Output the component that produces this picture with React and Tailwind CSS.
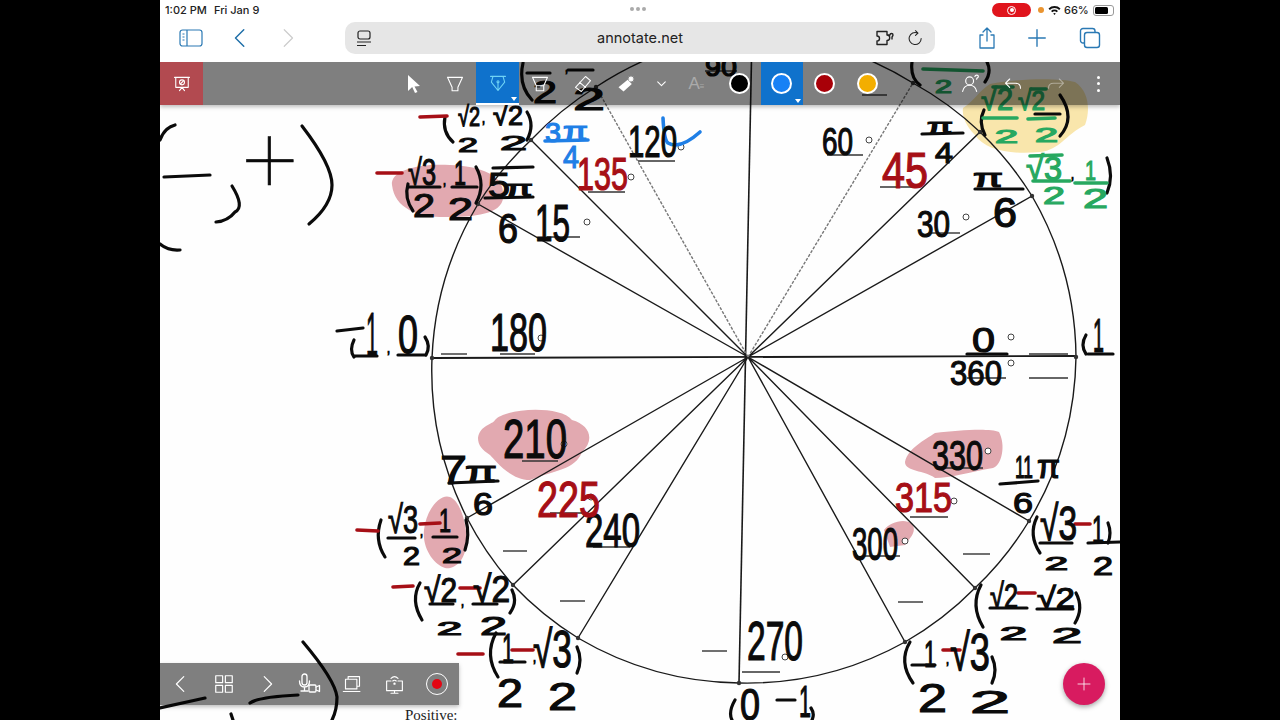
import React from 'react'

const INK = '#0b0b0b'
const RED = '#a60f16'
const BLUE = '#1f7fe6'
const GREEN = '#27a860'

// [text, left, baseline, width, digit height]
const inkText = [
  ['√2', 458, 126, 22, 20], ['√2', 493, 125, 30, 20], ['2', 458, 152, 20, 15], ['2', 500, 150, 27, 15], [',', 482, 123, 3, 10],
  ['2', 533, 103, 24, 23], ['2', 573, 110, 32, 23], [',', 565, 72, 3, 10], ['90', 705, 76, 32, 18],
  ['120', 628, 157, 49, 32], ['√3', 408, 185, 28, 26], ['2', 413, 217, 22, 24], [',', 443, 185, 3, 10], ['1', 454, 185, 12, 25], ['2', 448, 220, 25, 23],
  ['5', 488, 197, 22, 25], ['π', 505, 196, 28, 16], ['6', 498, 243, 20, 30], ['15', 535, 241, 35, 37],
  ['1', 366, 356, 12, 45], [',', 387, 353, 3, 10], ['0', 398, 353, 20, 38], ['180', 490, 351, 57, 38],
  ['60', 822, 155, 31, 28], ['π', 927, 133, 26, 15], ['4', 935, 163, 18, 21], ['π', 973, 187, 30, 18], ['6', 993, 227, 24, 30],
  ['30', 917, 237, 33, 27], ['0', 972, 352, 23, 25], ['360', 950, 385, 52, 25], ['1', 1093, 352, 11, 35],
  ['210', 503, 458, 64, 40], ['7', 440, 484, 27, 29], ['π', 465, 482, 32, 21], ['6', 473, 515, 20, 23],
  ['240', 585, 547, 55, 35], ['√3', 388, 533, 30, 28], ['2', 403, 565, 17, 18], [',', 420, 536, 3, 10], ['1', 439, 532, 12, 24], ['2', 442, 563, 20, 16],
  ['√2', 424, 602, 33, 25], ['2', 437, 635, 25, 13], [',', 461, 606, 3, 10], ['√2', 473, 602, 37, 27], ['2', 480, 635, 27, 18],
  ['1', 502, 663, 12, 30], ['2', 497, 707, 26, 29], [',', 533, 662, 3, 10], ['√3', 533, 667, 39, 37], ['2', 548, 710, 29, 28],
  ['330', 932, 470, 51, 30], ['11', 1015, 478, 18, 23], ['π', 1037, 478, 23, 24], ['6', 1013, 513, 20, 21],
  ['300', 852, 560, 46, 33], ['270', 747, 660, 56, 40],
  ['√3', 1040, 540, 37, 35], ['2', 1045, 570, 23, 13], ['1', 1092, 543, 12, 28], ['2', 1093, 575, 20, 18],
  ['√2', 990, 608, 28, 25], ['√2', 1037, 608, 38, 21], ['2', 1000, 640, 27, 13], ['2', 1052, 643, 30, 16],
  ['1', 924, 667, 12, 27], [',', 946, 664, 3, 10], ['√3', 950, 670, 40, 37], ['2', 918, 712, 29, 29], ['2', 970, 713, 40, 23],
  ['0', 740, 720, 20, 32], ['1', 799, 717, 12, 32], [',', 1071, 179, 3, 10],
]
const redText = [['135', 577, 190, 51, 33], ['45', 882, 188, 46, 36], ['225', 537, 517, 63, 36], ['315', 895, 512, 57, 30]]
const blueText = [['3', 545, 142, 16, 20], ['π', 563, 140, 25, 18], ['4', 563, 168, 16, 23]]
const greenText = [
  ['2', 935, 93, 17, 13], ['√2', 981, 110, 32, 22], ['2', 995, 143, 23, 13], ['√2', 1018, 110, 27, 20], ['2', 1035, 142, 23, 14],
  ['√3', 1026, 180, 36, 24], ['2', 1043, 204, 22, 17], ['1', 1085, 180, 11, 20], ['2', 1083, 208, 25, 20],
]

const inkStrokes = [
  'M175 125Q164 128 160 140', 'M164 177L210 175', 'M232 186Q245 207 235 212Q228 221 216 222',
  'M302 126Q332 165 332 185Q332 205 309 224', 'M160 244Q168 251 180 250',
  'M303 642Q335 680 337 697Q337 710 332 720', 'M160 708L205 698', 'M250 703Q258 697 298 695', 'M231 714L233 720',
  'M445 117Q442 132 453 142', 'M527 112Q535 125 527 140', 'M408 187L440 187', 'M452 187L477 187', 'M476 167Q486 185 476 203', 'M408 184Q404 198 413 211',
  'M493 168L533 167', 'M485 198L533 197', 'M523 63Q518 85 532 100', 'M527 73L550 73', 'M568 70L593 70',
  'M337 331L363 328', 'M354 340Q349 350 354 357', 'M355 356L377 356', 'M398 355L425 355', 'M425 337Q431 346 426 355',
  'M922 134L963 133', 'M975 189L1023 189', 'M967 354L1007 354', 'M1088 354L1113 354', 'M1086 335Q1080 345 1086 354', 'M1107 158Q1114 176 1107 193',
  'M912 62Q910 78 920 85', 'M987 62Q992 72 985 82', 'M1060 95Q1076 118 1060 136', 'M984 110Q978 122 985 135', 'M1035 114L1060 114',
  'M449 483L498 481', 'M381 520Q374 540 385 557', 'M388 538L415 538', 'M433 537L457 537', 'M466 520Q470 535 465 550',
  'M420 583Q410 600 422 620', 'M430 604L453 604', 'M473 604L497 604', 'M512 590Q518 602 510 613',
  'M496 633Q484 655 498 677', 'M500 662L525 662', 'M577 647Q583 660 577 673',
  'M1000 484L1038 481', 'M1037 517Q1028 535 1040 553', 'M1040 543L1072 543', 'M1088 543L1120 542', 'M1108 523Q1112 533 1108 543',
  'M981 585Q970 605 983 627', 'M990 608L1027 608', 'M1037 609L1073 609', 'M1076 593Q1084 608 1075 623',
  'M910 642Q898 662 913 683', 'M912 665L935 665', 'M992 657Q998 670 992 683',
  'M735 700Q728 712 732 720', 'M777 700L795 700', 'M811 708Q815 714 812 720',
]
const redStrokes = [
  'M420 117L447 116', 'M377 173L402 173', 'M357 530L378 531', 'M420 524L440 523', 'M393 587L413 586', 'M460 588L480 588',
  'M458 654L483 654', 'M512 650L533 650', 'M1075 524L1090 524', 'M1018 593L1035 593', 'M943 650L960 650',
]
const greenStrokes = [
  'M923 69L983 71', 'M983 118L1017 118', 'M1028 119L1055 118', 'M993 87L1013 87', 'M1031 89L1046 89',
  'M1030 156L1062 155', 'M1033 181L1070 181', 'M1075 183L1107 183',
]
const blanks = [
  [638, 161, 675], [588, 192, 625], [547, 237, 580], [441, 354, 467], [500, 354, 535], [827, 155, 863], [880, 187, 920], [930, 233, 960],
  [1029, 354, 1068], [1029, 378, 1068], [967, 378, 1006], [522, 461, 558], [550, 513, 587], [593, 547, 630], [503, 551, 527], [560, 601, 585],
  [702, 651, 727], [942, 468, 983], [910, 517, 948], [863, 556, 900], [963, 554, 990], [898, 602, 923], [742, 672, 780], [862, 95, 887], [705, 71, 737],
]
const degrees = [[631, 177], [681, 147], [587, 222], [541, 338], [869, 140], [966, 217], [1011, 337], [1011, 363], [564, 444], [591, 497], [988, 451], [954, 501], [905, 541], [785, 657]]
const rim = [[1032, 196], [980, 132], [913, 83], [596, 87], [531, 140], [478, 204], [432, 358], [467, 518], [513, 585], [578, 638], [739, 683], [905, 642], [975, 588], [1029, 521], [1076, 357]]

function Hand({ t, x, y, w, h, c }) {
  return (
    <text x={x} y={y} textLength={w} lengthAdjust="spacingAndGlyphs" fontSize={h / 0.72} fill={c} stroke={c} strokeWidth="1.200" className="font-['Liberation_Sans',sans-serif]">
      {t}
    </text>
  )
}

function Handwriting() {
  return (
    <svg viewBox="160 62 960 658" className="absolute inset-0 w-full h-full">
      {/* highlighter first so the ink sits on top */}
      <g fill="#e2a9b0">
        <path d="M392 185C390 170 420 163 450 165C480 166 505 175 503 195C505 212 480 217 450 217C420 218 395 210 392 185Z" />
        <path d="M478 438C480 425 492 425 495 420C505 408 560 405 572 420C590 425 595 440 582 452C575 470 555 470 530 480C510 480 495 460 490 455C482 450 478 445 478 438Z" />
        <path d="M424 530C426 510 440 493 450 497C462 502 468 530 466 545C465 560 455 570 445 568C435 565 422 550 424 530Z" />
        <path d="M905 462C908 448 925 440 935 433C960 430 990 428 999 432C1006 445 1002 465 993 468C970 472 950 478 935 478C925 470 905 472 905 462Z" />
        <path d="M884 530C890 522 905 518 912 524C918 532 908 540 905 545L890 547Z" />
      </g>
      <path fill="#f9e6ac" d="M963 108C975 100 980 90 990 84C1020 78 1060 78 1075 82C1090 92 1090 112 1085 125C1065 135 1060 150 1040 152C1010 155 985 150 975 135C965 125 962 115 963 108Z" />

      {/* printed unit circle */}
      <g fill="none" stroke="#1a1a1a" strokeWidth="1.400">
        <path d="M1076 357A326 326 0 0 0 1032 196A326 326 0 0 0 980 132A326 326 0 0 0 913 83A326 326 0 0 0 750 34A326 326 0 0 0 596 87A326 326 0 0 0 531 140A326 326 0 0 0 478 204A326 326 0 0 0 432 358A326 326 0 0 0 467 518A326 326 0 0 0 513 585A326 326 0 0 0 578 638A326 326 0 0 0 739 683A326 326 0 0 0 905 642A326 326 0 0 0 975 588A326 326 0 0 0 1029 521A326 326 0 0 0 1076 357Z" />
        <path d="M432 358L1076 356" strokeWidth="1.800" />
        <path d="M752 34L739 683" strokeWidth="1.600" />
        <path d="M748 357L1032 196M748 357L980 132M748 357L531 140M748 357L478 204M748 357L467 518M748 357L513 585M748 357L578 638M748 357L905 642M748 357L975 588M748 357L1029 521" />
        <path d="M748 357L913 83M748 357L596 87" stroke="#777" strokeDasharray="3 1.500" />
        {blanks.map(([x1, y, x2]) => (
          <path key={`${x1}-${y}`} d={`M${x1} ${y}L${x2} ${y}`} stroke="#333" />
        ))}
        {degrees.map(([cx, cy]) => (
          <circle key={`${cx}-${cy}`} cx={cx} cy={cy} r="3" fill="#fff" stroke="#444" strokeWidth="1" />
        ))}
      </g>
      {rim.map(([cx, cy]) => (
        <circle key={`${cx}-${cy}`} cx={cx} cy={cy} r="2.200" fill="#333" />
      ))}

      {/* pen strokes */}
      <g fill="none" strokeLinecap="round" strokeWidth="3.200">
        <g stroke={INK}>
          {inkStrokes.map((d) => <path key={d} d={d} />)}
        </g>
        <g stroke={RED} strokeWidth="3.600">
          {redStrokes.map((d) => <path key={d} d={d} />)}
        </g>
        <g stroke={GREEN} strokeWidth="3.600">
          {greenStrokes.map((d) => <path key={d} d={d} />)}
        </g>
        <path stroke={BLUE} strokeWidth="3.600" d="M545 141L588 140M663 118Q664 140 668 143Q680 150 700 132" />
      </g>
      <text x="243" y="191" textLength="54" lengthAdjust="spacingAndGlyphs" fontSize="92" fill={INK} className="font-['Roboto',sans-serif] font-thin" stroke={INK} strokeWidth=".6">+</text>
      {inkText.map(([t, x, y, w, h]) => <Hand key={`${t}${x}${y}`} t={t} x={x} y={y} w={w} h={h} c={INK} />)}
      {redText.map(([t, x, y, w, h]) => <Hand key={t} t={t} x={x} y={y} w={w} h={h} c={RED} />)}
      {blueText.map(([t, x, y, w, h]) => <Hand key={t} t={t} x={x} y={y} w={w} h={h} c={BLUE} />)}
      {greenText.map(([t, x, y, w, h]) => <Hand key={`${t}${x}`} t={t} x={x} y={y} w={w} h={h} c={GREEN} />)}
      <text x="405" y="720" fontSize="15" fill="#222" className="font-['Liberation_Serif',serif]">Positive:</text>
    </svg>
  )
}

function Line({ children, size = 24, width = 1.3, className = 'text-white' }) {
  return (
    <svg width={size} height={size} viewBox="0 0 24 24" fill="none" stroke="currentColor" strokeWidth={width} strokeLinecap="round" strokeLinejoin="round" className={className}>
      {children}
    </svg>
  )
}

function Slot({ children, className = '' }) {
  return <div className={`relative w-[42.7px] h-full flex items-center justify-center ${className}`}>{children}</div>
}

function Swatch({ className }) {
  return <span className={`w-[21px] h-[21px] rounded-full border-2 border-white ${className}`} />
}

function ActiveMark() {
  return <span className="absolute right-[2px] bottom-[2px] w-0 h-0 border-l-[3px] border-r-[3px] border-t-[4px] border-l-transparent border-r-transparent border-t-white" />
}

function TopTools() {
  return (
    <div className="absolute top-0 left-0 right-0 h-[43px] flex bg-black/50 shadow-[0_2px_4px_rgba(0,0,0,0.25)]">
      <div className="w-[43px] h-full bg-[#b24a50] flex items-center justify-center">
        <Line size={20}>
          <path d="M3 4h18M4.500 4v12h15V4M9 20l3-4 3 4" />
          <circle cx="12" cy="10" r="3" />
          <path d="M10 12l4-4" />
        </Line>
      </div>
      <div className="ml-[188px] flex h-full">
        <Slot>
          <svg className="ml-[4px]" width="14" height="18" viewBox="0 0 14 18"><path d="M1 0l12 11-5.500 .5L10.500 17 8 18 5.200 12 1 16z" fill="#fff" /></svg>
        </Slot>
        <Slot>
          <Line size={20}><path d="M3 4h18l-5.500 12v4h-7v-4z" /></Line>
        </Slot>
        <Slot className="bg-[#0f72cc] border-b-2 border-white">
          <Line size={20} className="text-[#6fd3f5]">
            <path d="M3 4h18M6 4l-2 7 8 10 8-10-2-7M12 21v-9" />
            <circle cx="12" cy="10.500" r="1.200" />
          </Line>
          <ActiveMark />
        </Slot>
        <Slot>
          <Line size={20}><path d="M3 4h18l-4.500 10v6h-9v-6zM7.500 14h9" /></Line>
        </Slot>
        <Slot>
          <Line size={20}><path d="M15 3l6 5-11 13-7-5zM8 10l7 6" /></Line>
        </Slot>
        <Slot>
          <svg width="20" height="20" viewBox="0 0 24 24">
            <path d="M3 16L14 7l5 5-10 9z" fill="#fff" />
            <path d="M18 2l1 2 2-1-1 2 2 1-2 1 1 2-2-1-1 2-1-2-2 1 1-2-2-1 2-1-1-2 2 1z" fill="#fff" />
          </svg>
        </Slot>
        <div className="w-7 h-full flex items-center justify-center">
          <Line size={13} width={2}><path d="M5 9l7 7 7-7" /></Line>
        </div>
        <Slot>
          <span className="font-['Liberation_Sans',sans-serif] text-[17px] text-white/35 leading-none">A<span className="text-[8px]">≡</span></span>
        </Slot>
        <Slot><Swatch className="bg-black" /></Slot>
        <Slot className="bg-[#0f72cc]">
          <Swatch className="bg-[#1781f5]" />
          <ActiveMark />
        </Slot>
        <Slot><Swatch className="bg-[#a80008]" /></Slot>
        <Slot><Swatch className="bg-[#f3ae00]" /></Slot>
      </div>
      <div className="ml-auto flex h-full">
        <Slot>
          <Line size={21}>
            <circle cx="11" cy="9" r="4.500" />
            <path d="M3 21c1-5 4-7 8-7s7 2 8 7M17 4c.5-2 4-2 4 0 0 1.500-2 1.500-2 3" />
          </Line>
        </Slot>
        <Slot>
          <Line size={20}><path d="M8 6L3 11l5 5M3 11h12c4 0 6 2 6 6" /></Line>
        </Slot>
        <Slot>
          <Line size={20} className="text-white/40"><path d="M16 6l5 5-5 5M21 11H9c-4 0-6 2-6 6" /></Line>
        </Slot>
        <Slot>
          <span className="flex flex-col gap-[3.500px]">
            <span className="w-[3px] h-[3px] rounded-full bg-white" />
            <span className="w-[3px] h-[3px] rounded-full bg-white" />
            <span className="w-[3px] h-[3px] rounded-full bg-white" />
          </span>
        </Slot>
      </div>
    </div>
  )
}

function BottomTools() {
  return (
    <div className="absolute left-0 bottom-[15px] h-[42px] w-[299px] flex bg-black/50 shadow-[0_2px_4px_rgba(0,0,0,0.25)]">
      <Slot><Line size={22}><path d="M15 4l-8 8 8 8" /></Line></Slot>
      <Slot>
        <Line size={22}>
          <rect x="3" y="3" width="7.500" height="7.500" />
          <rect x="13.500" y="3" width="7.500" height="7.500" />
          <rect x="3" y="13.500" width="7.500" height="7.500" />
          <rect x="13.500" y="13.500" width="7.500" height="7.500" />
        </Line>
      </Slot>
      <Slot><Line size={22}><path d="M9 4l8 8-8 8" /></Line></Slot>
      <Slot>
        <Line size={24}>
          <rect x="5" y="2" width="5" height="11" rx="2.500" />
          <path d="M2.500 9c0 4 2 6 5 6s5-2 5-6M7.500 15v4M4 19h7" />
          <rect x="12" y="13" width="7" height="7" rx="1" />
          <path d="M19 15l3.500-1.500v6L19 18" />
        </Line>
      </Slot>
      <Slot>
        <Line size={21}>
          <path d="M7 6V3h13v11h-3M4 6h13v11H4zM1.500 20h19" />
        </Line>
      </Slot>
      <Slot>
        <Line size={21}>
          <path d="M8 8H3v11h18V8h-5M12 19v3M8 22h8M8 5c2.500-2.500 5.500-2.500 8 0M10 8c1-1 3-1 4 0" />
          <circle cx="12" cy="11" r=".7" />
        </Line>
      </Slot>
      <Slot>
        <span className="w-[22px] h-[22px] rounded-full border border-white flex items-center justify-center">
          <span className="w-[10px] h-[10px] rounded-full bg-[#e30613]" />
        </span>
      </Slot>
    </div>
  )
}

function StatusBar() {
  return (
    <div className="h-5 bg-white flex items-center px-[5px] text-[11px] font-medium text-[#222] relative">
      <span className="w-[49px]">1:02 PM</span>
      <span>Fri Jan 9</span>
      <div className="absolute left-[470px] top-[7px] flex gap-[2px]">
        <span className="w-[4px] h-[4px] rounded-full bg-[#aaa]" />
        <span className="w-[4px] h-[4px] rounded-full bg-[#aaa]" />
        <span className="w-[4px] h-[4px] rounded-full bg-[#aaa]" />
      </div>
      <div className="ml-auto flex items-center">
        <span className="w-[39px] h-[14px] rounded-full bg-[#e0141c] flex items-center justify-center">
          <span className="w-[9px] h-[9px] rounded-full border border-white flex items-center justify-center">
            <span className="w-[4px] h-[4px] rounded-full bg-white" />
          </span>
        </span>
        <span className="ml-[7px] w-[6px] h-[6px] rounded-full bg-[#ea9430]" />
        <svg className="ml-[4px]" width="13" height="10" viewBox="0 0 13 10"><path d="M.5 3.500a8.500 8.500 0 0 1 12 0l-1.300 1.400a6.600 6.600 0 0 0-9.400 0zM3 6a5 5 0 0 1 7 0L8.700 7.300a3.200 3.200 0 0 0-4.400 0zM6.500 10L5.200 8.600a1.900 1.900 0 0 1 2.600 0z" fill="#111" /></svg>
        <span className="ml-[3px] w-[27px]">66%</span>
        <span className="ml-[2px] mr-[1px] w-[21px] h-[11px] rounded-[3px] border border-[#999] p-[1px]">
          <span className="block w-[13px] h-full rounded-[1.500px] bg-black" />
        </span>
      </div>
    </div>
  )
}

function BrowserBar() {
  return (
    <div className="h-[42px] bg-white flex items-start text-[#2a79b4]">
      <div className="w-[185px] h-[36px] flex items-center pl-[19px]">
        <svg width="24" height="18" viewBox="0 0 24 18" fill="none" stroke="currentColor" strokeWidth="1.200">
          <rect x="1" y="1" width="22" height="16" rx="2.500" />
          <path d="M8 1v16M3.500 5h2M3.500 8h2M3.500 11h2" />
        </svg>
        <Line size={22} width={1.600} className="ml-[27px] text-[#1f6fa8]"><path d="M15 3l-9 9 9 9" /></Line>
        <Line size={22} width={1.300} className="ml-[24px] text-[#ccc]"><path d="M9 3l9 9-9 9" /></Line>
      </div>
      <div className="w-[590px] h-[32px] mt-[2px] rounded-[10px] bg-[#e6e6e6] flex items-center px-[11px] text-[#222]">
        <svg width="16" height="17" viewBox="0 0 16 17" fill="none" stroke="currentColor" strokeWidth="1.200">
          <rect x="2" y="1" width="12" height="8" rx="2" />
          <path d="M1 12h14M1 15.500h9" />
        </svg>
        <span className="flex-1 text-center text-[14.500px] text-[#222] pl-[32px]">annotate.net</span>
        <svg width="20" height="16" viewBox="0 0 20 16" fill="none" stroke="currentColor" strokeWidth="1.400" strokeLinejoin="round">
          <path d="M1 1.500h10v3.500a2 2 0 1 1 0 5.500v4H1v-3.500a2 2 0 0 0 0-5V1.500zM11 5h3a1.500 1.500 0 1 1 3 0c0 1-1 1.500-1 2.500v2" />
        </svg>
        <Line size={17} width={1.500} className="ml-[11px] text-[#222]">
          <path d="M20 12a8.500 8.500 0 1 1-5-7.700M12 1l3.500 3.300L12 7.500" />
        </Line>
      </div>
      <div className="flex-1 h-[36px] flex items-center pl-[40px]">
        <Line size={24} width={1.300} className="text-[#2a79b4]"><path d="M8 9H5v13h14V9h-3M12 15V2M8 6l4-4 4 4" /></Line>
        <Line size={22} width={1.500} className="ml-[27px] text-[#2a79b4]"><path d="M12 3v18M3 12h18" /></Line>
        <svg className="ml-[31px]" width="22" height="22" viewBox="0 0 22 22" fill="none" stroke="currentColor" strokeWidth="1.400">
          <path d="M5 16H4a2.500 2.500 0 0 1-2.500-2.500V4A2.500 2.500 0 0 1 4 1.500h9.500A2.500 2.500 0 0 1 16 4v1" />
          <rect x="5.500" y="5.500" width="15" height="15" rx="2.500" />
        </svg>
      </div>
    </div>
  )
}

function App() {
  return (
    <div className="h-[720px] bg-black flex justify-center overflow-hidden font-['Inter',sans-serif]">
      <div className="w-[960px] h-full flex flex-col">
        <StatusBar />
        <BrowserBar />
        <div className="relative flex-1 bg-[#fefefe] overflow-hidden">
          <Handwriting />
          <TopTools />
          <BottomTools />
          <button className="absolute left-[903px] top-[601px] w-[42px] h-[42px] rounded-full bg-[#d81b60] shadow-[0_2px_5px_rgba(0,0,0,0.35)] flex items-center justify-center">
            <Line size={16} width={1.200}><path d="M12 3v18M3 12h18" /></Line>
          </button>
        </div>
      </div>
    </div>
  )
}

export default App
